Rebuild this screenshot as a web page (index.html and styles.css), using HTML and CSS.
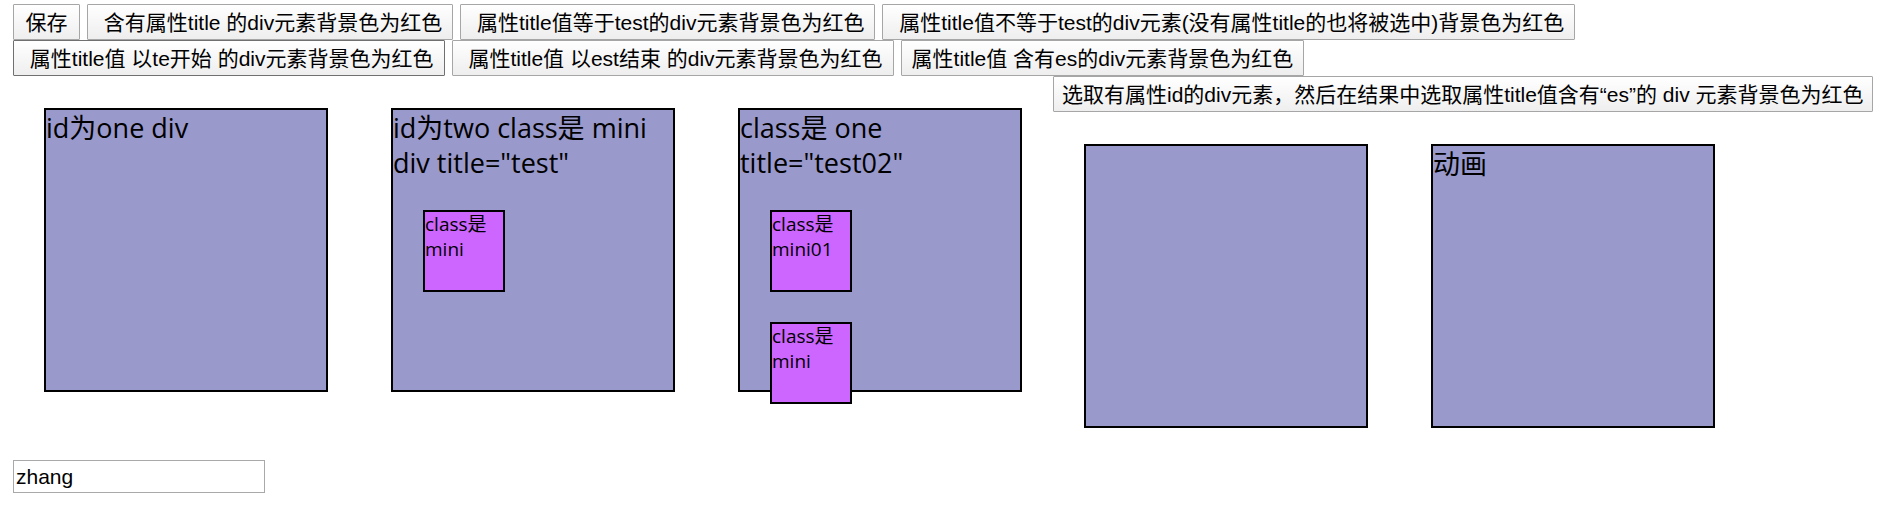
FILE: index.html
```html
<!DOCTYPE html>
<html lang="zh-CN">
<head>
<meta charset="utf-8">
<title>属性选择器</title>
<link rel="stylesheet" href="styles.css">
</head>
<body>
<div class="toolbar">
  <button class="btn" type="button">保存</button>
  <button class="btn" type="button">&nbsp;含有属性title 的div元素背景色为红色</button>
  <button class="btn" type="button">&nbsp;属性title值等于test的div元素背景色为红色</button>
  <button class="btn" type="button">&nbsp;属性title值不等于test的div元素(没有属性title的也将被选中)背景色为红色</button>
</div>
<div class="toolbar">
  <button class="btn btn-active" type="button">&nbsp;属性title值 以te开始 的div元素背景色为红色</button>
  <button class="btn" type="button">&nbsp;属性title值 以est结束 的div元素背景色为红色</button>
  <button class="btn" type="button">属性title值 含有es的div元素背景色为红色</button>
</div>
<main class="stage">
  <div class="group">
    <div class="box">id为one div</div>
    <div class="box" title="test">id为two class是 mini div title="test"
      <div class="mini">class是 mini</div>
    </div>
    <div class="box" title="test02">class是 one title="test02"
      <div class="mini">class是 mini01</div>
      <div class="mini">class是 mini</div>
    </div>
  </div>
  <div class="side">
    <button class="btn btn-wide" type="button">选取有属性id的div元素，然后在结果中选取属性title值含有“es”的 div 元素背景色为红色</button>
    <div class="group">
      <div class="box"></div>
      <div class="box">动画</div>
    </div>
  </div>
</main>
<input class="field" type="text" value="zhang" aria-label="name">
</body>
</html>
```
FILE: styles.css
```css
body {
  margin: 4px 8px 0 13px;
  background: #fff;
  color: #000;
  font-family: "Open Sans", "Noto Sans CJK SC", sans-serif;
  font-size: 27px;
  line-height: 35px;
}

.toolbar {
  display: flex;
  gap: 7px;
}

.btn {
  min-width: 67px;
  height: 36px;
  padding: 1px 10px 0;
  border: 1px solid #a6a6a6;
  border-radius: 1px;
  background: linear-gradient(#fff, #eee);
  color: #000;
  font-family: "Liberation Sans", "Noto Sans CJK SC", sans-serif;
  font-size: 21px;
  line-height: 32px;
  white-space: nowrap;
}

.btn-active {
  border-color: #707070;
}

.btn-wide {
  padding: 1px 8px 0;
}

.stage {
  display: flex;
  gap: 31px;
}

.side {
  display: flex;
  flex-direction: column;
  align-items: flex-start;
}

.group {
  display: flex;
  gap: 63px;
  padding: 32px 31px;
}

.stage > .group {
  padding-right: 0;
}

.box {
  box-sizing: border-box;
  width: 284px;
  height: 284px;
  border: 2px solid #000;
  background: #99c;
}

.mini {
  box-sizing: border-box;
  width: 82px;
  height: 82px;
  margin: 30px;
  border: 2px solid #000;
  background: #c6f;
  font-size: 19px;
  line-height: 25px;
}

.field {
  display: block;
  box-sizing: border-box;
  width: 252px;
  height: 33px;
  padding: 0 2px;
  border: 1px solid #a9a9a9;
  background: #fff;
  color: #000;
  font-family: "Liberation Sans", sans-serif;
  font-size: 21px;
}
```
